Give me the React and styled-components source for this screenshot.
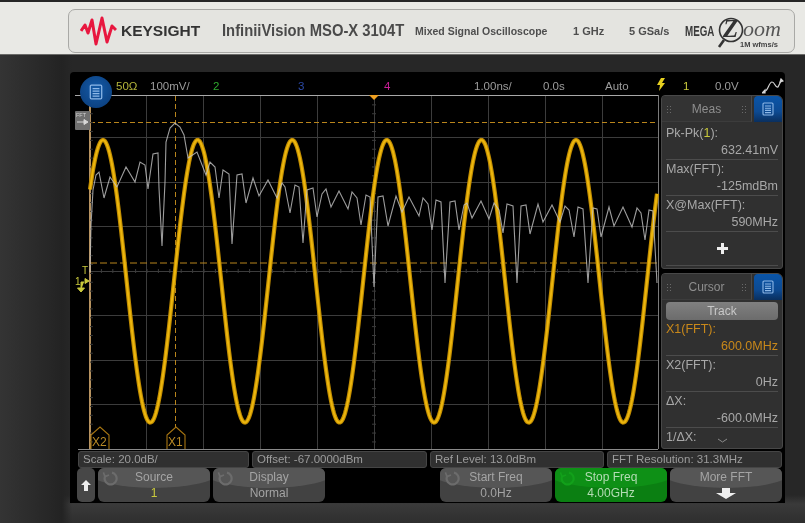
import React from 'react'
import styled, { createGlobalStyle } from 'styled-components'

const Global = createGlobalStyle`
    html, body { margin: 0; padding: 0; background: #2a2a2a; overflow: hidden; }
    * { box-sizing: border-box; }
`

const Page = styled.div`
    width: 805px;
    height: 523px;
    display: flex;
    flex-direction: column;
    font-family: "Liberation Sans", Arial, sans-serif;
    filter: blur(0.45px);
    overflow: hidden;
`

const Band = styled.header`
    height: 55px;
    flex: none;
    padding: 9px 10px 2px 68px;
    background: #e9e9e5;
    border-top: 2px solid #262626;
    border-bottom: 1px solid #6a6a68;
`

const Plate = styled.div`
    height: 44px;
    margin-top: -2px;
    display: flex;
    align-items: center;
    border: 1.5px solid #a9a9a6;
    border-radius: 7px;
    background: #e4e4e0;
    padding-left: 11px;
    color: #3c3c3c;
    white-space: nowrap;
`

const Brand = styled.span`
    margin-left: 4px;
    width: 101px;
    font-size: 15.5px;
    font-weight: 700;
    color: #333;
`

const Model = styled.span`
    width: 193px;
    font-size: 16px;
    font-weight: 700;
    color: #4a4a4a;
    transform-origin: left center;
    transform: scaleX(0.925);
`

const PlateNote = styled.span`
    width: ${props => props.$w}px;
    font-size: ${props => props.$size || 10.5}px;
    font-weight: 700;
    color: #4e4e4e;
`

const MegaWord = styled.span`
    font-size: 14px;
    font-weight: 700;
    color: #3a3a3a;
    transform-origin: left center;
    transform: scaleX(0.7);
    width: 31px;
`

const ZoomMark = styled.span`
    position: relative;
    display: block;
    width: 66px;
    height: 40px;
`

const ZoomRing = styled.svg`
    position: absolute;
    left: 0;
    top: 0;
`

const ZoomZ = styled.span`
    position: absolute;
    left: 7px;
    top: 4px;
    font: italic 700 25px "Liberation Serif", serif;
    color: #333;
`

const ZoomRest = styled.span`
    position: absolute;
    left: 27px;
    top: 5px;
    font: italic 400 22px "Liberation Serif", serif;
    color: #555;
`

const ZoomSub = styled.span`
    position: absolute;
    left: 24px;
    top: 29px;
    font-size: 7.5px;
    font-weight: 700;
    color: #444;
`

const Bezel = styled.main`
    flex: 1;
    padding: 17px 20px 20px 70px;
    background:
        linear-gradient(90deg, #343434 0, #2c2c2c 30px, #232323 62px, rgba(35, 35, 35, 0) 72px),
        linear-gradient(180deg, #272727 0, #272727 440px, #3a3a3a 449px, #2e2e2e 468px);
`

const Screen = styled.section`
    position: relative;
    width: 715px;
    height: 431px;
    background: #000;
    border-radius: 4px 4px 0 0;
    display: flex;
    flex-direction: column;
`

const TopBar = styled.div`
    height: 23px;
    flex: none;
    padding: 4px 0 0 46px;
    display: flex;
    align-items: center;
    font-size: 11.5px;
    color: #9c9c9c;
`

const TopItem = styled.span`
    width: ${props => props.$w}px;
    flex: none;
    color: ${props => props.$color || '#9c9c9c'};
`

const MainRow = styled.div`
    height: 355px;
    flex: none;
    display: flex;
`

const Chart = styled.svg`
    display: block;
    flex: none;
`

const SideColumn = styled.aside`
    width: 122px;
    margin-left: 1px;
    display: flex;
    flex-direction: column;
    gap: 4px;
`

const Panel = styled.div`
    height: ${props => props.$h}px;
    background: #303030;
    border: 1px solid #484848;
    border-radius: 4px 6px 3px 3px;
    overflow: hidden;
    color: #a8a8a8;
    font-size: 12.5px;
`

const PanelHead = styled.div`
    height: 26px;
    display: flex;
    margin-bottom: 2px;
`

const PanelTitle = styled.div`
    flex: 1;
    display: flex;
    align-items: center;
    justify-content: space-between;
    padding: 0 4px;
    background: #333;
    border-right: 1px solid #4a4a4a;
    border-bottom: 1px solid #3c3c3c;
    color: #8e8e8e;
    font-size: 12px;
`

const Grip = styled.span`
    width: 6px;
    height: 8px;
    background-image: radial-gradient(#6a6a6a 0.8px, transparent 1px);
    background-size: 3px 3px;
`

const BlueTab = styled.div`
    width: 28px;
    margin-left: 2px;
    display: flex;
    align-items: center;
    justify-content: center;
    background: linear-gradient(180deg, #0a55a8 0, #0d4a92 60%, #0a2f5e 100%);
    border-radius: 4px 4px 0 0;
`

const BlueDot = styled.div`
    position: absolute;
    left: 10px;
    top: 4px;
    width: 32px;
    height: 32px;
    border-radius: 50%;
    background: radial-gradient(circle at 50% 40%, #135aa8, #0c3f7d 85%);
    display: flex;
    align-items: center;
    justify-content: center;
`

const Reading = styled.div`
    height: ${props => props.$h || 36}px;
    margin: 0 4px;
    padding-top: 1px;
    border-bottom: ${props => props.$last ? 'none' : '1px solid #4c4c4c'};
    line-height: 17px;
    color: ${props => props.$color || '#a8a8a8'};
`

const ReadValue = styled.div`
    text-align: right;
`

const Ch = styled.span`
    color: #c9c93c;
`

const AddRow = styled.div`
    height: 34px;
    margin: 0 4px;
    border-bottom: 1px solid #4c4c4c;
    display: flex;
    align-items: center;
    justify-content: center;
`

const TrackButton = styled.div`
    height: 18px;
    margin: 2px 4px 0;
    border-radius: 4px;
    background: linear-gradient(180deg, #808080, #6c6c6c);
    color: #c8c8c8;
    font-size: 12px;
    line-height: 18px;
    text-align: center;
`

const Chevron = styled.div`
    display: flex;
    justify-content: center;
    margin-top: -8px;
`

const StatusRow = styled.div`
    height: 17px;
    margin: 1px 0 0 8px;
    flex: none;
    display: flex;
    gap: 3px;
`

const StatusCell = styled.div`
    width: ${props => props.$w}px;
    padding-left: 4px;
    background: #303030;
    border: 1px solid #454545;
    border-radius: 3px;
    color: #9c9c9c;
    font-size: 11.5px;
    line-height: 15px;
    white-space: nowrap;
`

const SoftRow = styled.div`
    height: 34px;
    margin: 0 0 0 7px;
    width: 705px;
    flex: none;
    display: flex;
    gap: 3px;
`

const ArrowKey = styled.div`
    width: 18px;
    border-radius: 5px;
    background: #474747;
    display: flex;
    align-items: center;
    justify-content: center;
`

const SoftKey = styled.div`
    position: relative;
    width: 112px;
    margin-left: ${props => props.$push ? 'auto' : '0'};
    border-radius: 6px;
    background: ${props => props.$active ? '#0b7f12' : '#424242'};
    overflow: hidden;
    text-align: center;
    font-size: 12px;
    line-height: 16px;
    color: ${props => props.$active ? '#b4dcb4' : '#a4a4a4'};

    &::before {
        content: '';
        position: absolute;
        left: -8px;
        right: -8px;
        top: -10px;
        height: 30px;
        border-radius: 50%;
        background: ${props => props.$active ? '#0e9016' : '#565656'};
    }
`

const SoftLine = styled.div`
    position: relative;
    height: 16px;
    margin-top: ${props => props.$first ? '1px' : '0'};
    color: ${props => props.$color || 'inherit'};
    display: flex;
    align-items: center;
    justify-content: center;
`

const Spin = styled.svg`
    position: absolute;
    left: 4px;
    top: 2px;
`

const MenuIcon = ({ size = 14, color = '#8db8e8' }) => (
    <svg width={size} height={size} viewBox="0 0 14 14" fill="none" stroke={color} strokeWidth="1.1">
        <rect x="2" y="1" width="10" height="12" rx="1" />
        <path d="M4 4h6M4 6.2h6M4 8.4h6M4 10.6h6" />
    </svg>
)

const SpinIcon = ({ color }) => (
    <Spin width="16" height="16" viewBox="0 0 16 16" fill="none" stroke={color} strokeWidth="2.2">
        <path d="M3.4 5.5A6 6 0 1 0 10 2.6" />
        <path d="M1.4 2.4l1.6 4.2 4-1.6" strokeWidth="1.6" />
    </Spin>
)

const fftPoints = [
    [90, 272], [91, 225], [93, 190], [96, 175], [99, 172], [104, 198], [110, 177], [117, 187], [126, 167], [135, 182],
    [140, 162], [145, 165], [148, 189], [153, 154], [158, 153], [159, 188], [162, 246], [165, 182], [166, 142],
    [170, 128], [175, 123], [180, 127], [184, 135], [188, 158], [197, 152], [206, 175], [210, 162], [215, 167],
    [219, 198], [223, 170], [229, 174], [232, 244], [237, 175], [242, 174], [246, 203], [253, 178], [259, 196],
    [268, 180], [277, 198], [282, 183], [285, 187], [290, 213], [295, 185], [299, 187], [303, 243], [307, 190],
    [313, 188], [317, 217], [322, 194], [326, 189], [331, 207], [339, 191], [348, 209], [352, 192], [357, 198],
    [361, 225], [366, 195], [370, 197], [374, 287], [378, 197], [383, 196], [388, 226], [396, 196], [402, 212],
    [409, 197], [419, 216], [423, 198], [428, 204], [432, 230], [436, 200], [441, 202], [445, 283], [450, 202],
    [455, 201], [459, 230], [464, 205], [467, 203], [472, 218], [481, 201], [489, 219], [494, 203], [499, 210],
    [503, 233], [507, 204], [513, 206], [517, 283], [521, 206], [526, 205], [530, 234], [538, 204], [543, 222],
    [552, 205], [560, 222], [565, 206], [569, 210], [574, 237], [578, 207], [583, 209], [588, 283], [593, 208],
    [597, 209], [601, 237], [609, 207], [614, 226], [623, 207], [632, 227], [637, 208], [641, 213], [645, 240],
    [649, 210], [653, 211], [657, 283],
].map(p => p.join(',')).join(' ')

const sinePoints = Array.from({ length: 568 }, (_, i) => {
    const x = 90 + i
    const y = 281.3 - 141.3 * Math.cos((2 * Math.PI * (x - 103)) / 94.6)
    return `${x},${y.toFixed(1)}`
}).join(' ')

const gridX = [146, 203, 260, 317, 374, 431, 488, 545, 602]
const gridY = [137, 182, 226, 271, 315, 360, 404]
const ticksX = Array.from({ length: 50 }, (_, i) => 90 + i * 11.4)
const ticksY = Array.from({ length: 40 }, (_, i) => 96 + i * 8.87)

const Scope = () => (
    <Chart width="590" height="355" viewBox="70 95 590 355">
        {gridX.map(x => <line key={x} x1={x + 0.5} x2={x + 0.5} y1="95" y2="449" stroke="#3c3c3c" />)}
        {gridY.map(y => <line key={y} x1="90" x2="658" y1={y + 0.5} y2={y + 0.5} stroke="#3c3c3c" />)}
        {ticksX.map(x => <line key={x} x1={x} x2={x} y1="269" y2="273" stroke="#3c3c3c" />)}
        {ticksY.map(y => <line key={y} x1="372" x2="376" y1={y} y2={y} stroke="#3c3c3c" />)}
        <line x1="75" x2="658" y1="95.5" y2="95.5" stroke="#a8a8a8" />
        <line x1="658.5" x2="658.5" y1="95" y2="449" stroke="#7a7a7a" />
        <line x1="78" x2="658" y1="449.5" y2="449.5" stroke="#8a8a8a" />

        <line x1="90" x2="658" y1="122.5" y2="122.5" stroke="#b9851c" strokeDasharray="5 3" />
        <line x1="90" x2="658" y1="263" y2="263" stroke="#b9851c" strokeDasharray="7 3" />
        <line x1="175.5" x2="175.5" y1="96" y2="428" stroke="#b9851c" strokeDasharray="5 3" />
        <line x1="90" x2="90" y1="96" y2="449" stroke="#e5b878" strokeWidth="1.6" />
        {ticksY.map(y => <line key={y} x1="90" x2="93" y1={y} y2={y} stroke="#333" />)}

        <polyline points={sinePoints} fill="none" stroke="#c08c00" strokeWidth="4.2" />
        <polyline points={sinePoints} fill="none" stroke="#ecb60e" strokeWidth="2" />
        <polyline points={fftPoints} fill="none" stroke="#c4c4c4" strokeWidth="1.1" opacity="0.8" />

        <path d="M369 95h10l-5 5z" fill="#f0a020" />

        <rect x="75" y="111" width="15" height="19" rx="1" fill="#6f6f6f" />
        <text x="76" y="117" fontSize="5.5" fontFamily="Liberation Sans" fill="#d0d0d0">FFT</text>
        <path d="M77 122h8M84 119.5l4 2.5-4 2.5z" stroke="#d8d8d8" fill="#d8d8d8" strokeWidth="1" />

        <text x="82" y="274" fontSize="10" fontFamily="Liberation Sans" fill="#c9c93c">T</text>
        <text x="75" y="285" fontSize="10" fontFamily="Liberation Sans" fill="#c9c93c">1</text>
        <path d="M81 290v-8h3M85 278.5l4 2.5-4 2.5zM77.5 288h7l-3.5 4z" stroke="#c9c93c" fill="#c9c93c" strokeWidth="1" />

        <path d="M91 449v-14l9-8 9 8v14" fill="none" stroke="#a87612" strokeWidth="1.1" />
        <text x="92" y="446" fontSize="12" fontFamily="Liberation Sans" fill="#b98a26">X2</text>
        <path d="M167 449v-14l9-8 9 8v14" fill="none" stroke="#a87612" strokeWidth="1.1" />
        <text x="168" y="446" fontSize="12" fontFamily="Liberation Sans" fill="#b98a26">X1</text>
    </Chart>
)

const App = () => (
    <>
        <Global />
        <Page>
            <Band>
                <Plate>
                    <svg width="37" height="32" viewBox="80 16 37 32" fill="none" stroke="#e8173f" strokeWidth="3" strokeLinejoin="round">
                        <polyline points="81,32 85,26 88,34 92,21 96,45 102,19 107,43 112,27 116,31" />
                    </svg>
                    <Brand>KEYSIGHT</Brand>
                    <Model>InfiniiVision MSO-X 3104T</Model>
                    <PlateNote $w={158}>Mixed Signal Oscilloscope</PlateNote>
                    <PlateNote $w={56} $size={11}>1 GHz</PlateNote>
                    <PlateNote $w={56} $size={11}>5 GSa/s</PlateNote>
                    <MegaWord>MEGA</MegaWord>
                    <ZoomMark>
                        <ZoomRing width="30" height="40" viewBox="0 0 30 40" fill="none" stroke="#333">
                            <circle cx="15" cy="19" r="11.5" strokeWidth="1.6" />
                            <path d="M8 29l-5 7" strokeWidth="2.6" />
                        </ZoomRing>
                        <ZoomZ>Z</ZoomZ>
                        <ZoomRest>oom</ZoomRest>
                        <ZoomSub>1M wfms/s</ZoomSub>
                    </ZoomMark>
                </Plate>
            </Band>
            <Bezel>
                <Screen>
                    <TopBar>
                        <TopItem $w={34} $color="#b5b53a">50Ω</TopItem>
                        <TopItem $w={63}>100mV/</TopItem>
                        <TopItem $w={85} $color="#2ea82e">2</TopItem>
                        <TopItem $w={86} $color="#2c4aa8">3</TopItem>
                        <TopItem $w={90} $color="#c81e96">4</TopItem>
                        <TopItem $w={69}>1.00ns/</TopItem>
                        <TopItem $w={62}>0.0s</TopItem>
                        <TopItem $w={52}>Auto</TopItem>
                        <TopItem $w={26} $color="#e6d020">
                            <svg width="8" height="13" viewBox="0 0 8 13" fill="#e6d020"><path d="M4 0h4L5 5h3L2 13l1-6H0z" /></svg>
                        </TopItem>
                        <TopItem $w={32} $color="#c9c93c">1</TopItem>
                        <TopItem $w={47}>0.0V</TopItem>
                        <svg width="22" height="16" viewBox="0 0 22 16" fill="none" stroke="#d4d4d4" strokeWidth="1.2">
                            <path d="M3 13c3 0 4-9 7-9s3 6 6 5l3-6" />
                            <path d="M0 15l3-3v3zM19 1l2 2-3 1z" fill="#d4d4d4" />
                        </svg>
                    </TopBar>
                    <MainRow>
                        <Scope />
                        <SideColumn>
                            <Panel $h={174}>
                                <PanelHead>
                                    <PanelTitle><Grip />Meas<Grip /></PanelTitle>
                                    <BlueTab><MenuIcon /></BlueTab>
                                </PanelHead>
                                <Reading>Pk-Pk(<Ch>1</Ch>):<ReadValue>632.41mV</ReadValue></Reading>
                                <Reading>Max(FFT):<ReadValue>-125mdBm</ReadValue></Reading>
                                <Reading>X@Max(FFT):<ReadValue>590MHz</ReadValue></Reading>
                                <AddRow>
                                    <svg width="11" height="11" viewBox="0 0 11 11" fill="#eee"><path d="M4 0h3v4h4v3H7v4H4V7H0V4h4z" /></svg>
                                </AddRow>
                            </Panel>
                            <Panel $h={176}>
                                <PanelHead>
                                    <PanelTitle><Grip />Cursor<Grip /></PanelTitle>
                                    <BlueTab><MenuIcon /></BlueTab>
                                </PanelHead>
                                <TrackButton>Track</TrackButton>
                                <Reading $color="#c8881a">X1(FFT):<ReadValue>600.0MHz</ReadValue></Reading>
                                <Reading>X2(FFT):<ReadValue>0Hz</ReadValue></Reading>
                                <Reading>ΔX:<ReadValue>-600.0MHz</ReadValue></Reading>
                                <Reading $last $h={18}>1/ΔX:</Reading>
                                <Chevron>
                                    <svg width="11" height="5" viewBox="0 0 11 5" fill="none" stroke="#8a8a8a"><path d="M1 1l4.5 3L10 1" /></svg>
                                </Chevron>
                            </Panel>
                        </SideColumn>
                    </MainRow>
                    <StatusRow>
                        <StatusCell $w={171}>Scale: 20.0dB/</StatusCell>
                        <StatusCell $w={175}>Offset: -67.0000dBm</StatusCell>
                        <StatusCell $w={174}>Ref Level: 13.0dBm</StatusCell>
                        <StatusCell $w={175}>FFT Resolution: 31.3MHz</StatusCell>
                    </StatusRow>
                    <SoftRow>
                        <ArrowKey>
                            <svg width="10" height="11" viewBox="0 0 10 11" fill="#eee"><path d="M5 0l5 5H7v6H3V5H0z" /></svg>
                        </ArrowKey>
                        <SoftKey>
                            <SpinIcon color="#6c6c6c" />
                            <SoftLine $first>Source</SoftLine>
                            <SoftLine $color="#c9c93c">1</SoftLine>
                        </SoftKey>
                        <SoftKey>
                            <SpinIcon color="#6c6c6c" />
                            <SoftLine $first>Display</SoftLine>
                            <SoftLine>Normal</SoftLine>
                        </SoftKey>
                        <SoftKey $push>
                            <SpinIcon color="#6c6c6c" />
                            <SoftLine $first>Start Freq</SoftLine>
                            <SoftLine>0.0Hz</SoftLine>
                        </SoftKey>
                        <SoftKey $active>
                            <SpinIcon color="#12a01a" />
                            <SoftLine $first>Stop Freq</SoftLine>
                            <SoftLine>4.00GHz</SoftLine>
                        </SoftKey>
                        <SoftKey>
                            <SoftLine $first>More FFT</SoftLine>
                            <SoftLine>
                                <svg width="20" height="11" viewBox="0 0 20 11" fill="#eee"><path d="M6 0h8v5h6l-10 6L0 5h6z" /></svg>
                            </SoftLine>
                        </SoftKey>
                    </SoftRow>
                    <BlueDot><MenuIcon size={16} /></BlueDot>
                </Screen>
            </Bezel>
        </Page>
    </>
)

export default App
